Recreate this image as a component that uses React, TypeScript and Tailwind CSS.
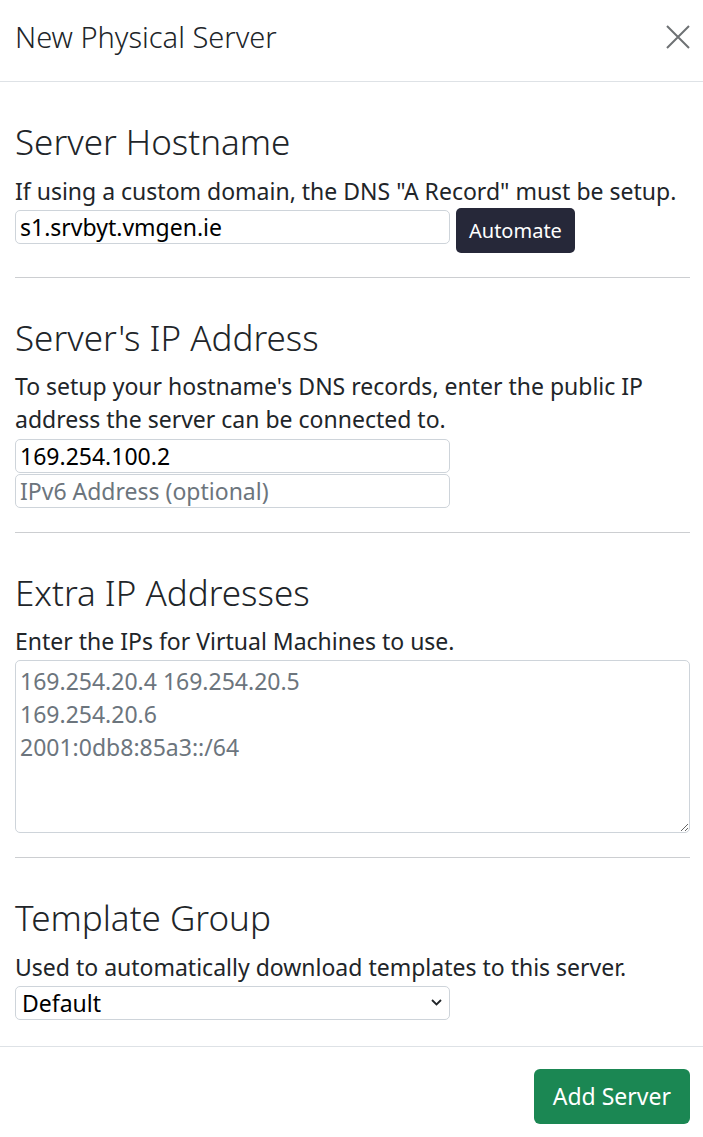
import { useState } from "react"

const font = { fontFamily: '"Noto Sans", "Open Sans", sans-serif' }

function Section({
  title,
  children,
  last,
}: {
  title: string
  children: React.ReactNode
  last?: boolean
}) {
  return (
    <section className={last ? "" : "border-b border-[#ccced1] pb-[24px]"}>
      <h3 className="pt-[41px] text-[35px] leading-[38px] font-light text-[#212529]">{title}</h3>
      {children}
    </section>
  )
}

export default function App() {
  const [hostname, setHostname] = useState("s1.srvbyt.vmgen.ie")
  const [ipv4, setIpv4] = useState("169.254.100.2")
  const [ipv6, setIpv6] = useState("")
  const [extra, setExtra] = useState("")

  const input =
    "block w-[435px] h-[34px] rounded-[5px] border border-[#ced4da] bg-white px-[4px] text-[23px] leading-[30px] text-black outline-none placeholder:text-[#6c757d]"

  return (
    <div className="w-[703px] h-[1137px] bg-white flex flex-col text-[#212529]" style={font}>
      <header className="h-[82px] shrink-0 border-b border-[#dee2e6] flex items-center justify-between pl-[15px] pr-[12px]">
        <h5 className="text-[29px] leading-[34px] font-light -mt-[8px]">New Physical Server</h5>
        <button className="w-[26px] h-[26px] -mt-[8px] flex items-center justify-center">
          <svg width="24" height="24" viewBox="0 0 24 24" fill="none" stroke="#6e7174" strokeWidth="2">
            <path d="M1 1 L23 23 M23 1 L1 23" />
          </svg>
        </button>
      </header>

      <main className="flex-1 px-[15px] pr-[13px]">
        <Section title="Server Hostname">
          <p className="mt-[14px] text-[23px] leading-[33px]">
            If using a custom domain, the DNS "A Record" must be setup.
          </p>
          <div className="flex items-start gap-[6px]">
            <input className={input + " mt-[2px]"} value={hostname} onChange={(e) => setHostname(e.target.value)} />
            <button className="h-[45px] px-[13px] rounded-[5px] bg-[#262839] text-white text-[20px]">
              Automate
            </button>
          </div>
        </Section>

        <Section title="Server's IP Address">
          <p className="mt-[13px] text-[23px] leading-[33px]">
            To setup your hostname's DNS records, enter the public IP address the server can be connected to.
          </p>
          <div className="mt-[3px] flex flex-col gap-[1px]">
            <input className={input} value={ipv4} onChange={(e) => setIpv4(e.target.value)} />
            <input
              className={input}
              placeholder="IPv6 Address (optional)"
              value={ipv6}
              onChange={(e) => setIpv6(e.target.value)}
            />
          </div>
        </Section>

        <Section title="Extra IP Addresses">
          <p className="mt-[13px] text-[23px] leading-[33px]">Enter the IPs for Virtual Machines to use.</p>
          <textarea
            className="mt-[2px] block w-full h-[173px] rounded-[5px] border border-[#ced4da] px-[4px] pt-[4px] text-[23px] leading-[33px] text-black outline-none placeholder:text-[#6c757d]"
            placeholder={"169.254.20.4 169.254.20.5\n169.254.20.6\n2001:0db8:85a3::/64"}
            value={extra}
            onChange={(e) => setExtra(e.target.value)}
          />
        </Section>

        <Section title="Template Group" last>
          <p className="mt-[14px] text-[23px] leading-[33px]">
            Used to automatically download templates to this server.
          </p>
          <div className="relative mt-[2px] w-[435px]">
            <select className="block w-full h-[34px] appearance-none rounded-[5px] border border-[#ced4da] bg-white px-[6px] text-[23px] leading-[30px] text-black outline-none">
              <option>Default</option>
            </select>
            <svg
              className="absolute right-[8px] top-[13px] pointer-events-none"
              width="11"
              height="7"
              viewBox="0 0 11 7"
              fill="none"
              stroke="#212529"
              strokeWidth="1.8"
            >
              <path d="M1 1 L5.5 5.5 L10 1" />
            </svg>
          </div>
        </Section>
      </main>

      <footer className="h-[91px] shrink-0 border-t border-[#dee2e6] flex items-start justify-end pr-[13px] pt-[22px]">
        <button className="h-[55px] px-[19px] rounded-[6px] bg-[#1b8753] text-white text-[23px]">Add Server</button>
      </footer>
    </div>
  )
}
